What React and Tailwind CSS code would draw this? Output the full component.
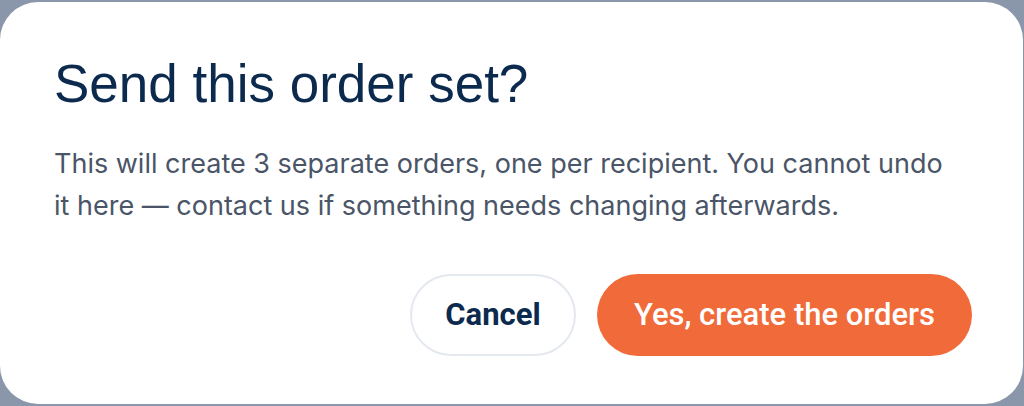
import React from 'react';

const ConfirmDialog = () => {
    return (
        <div className="w-[1024px] h-[406px] bg-[#8a96aa] pt-[2px] pr-[1px]">
            <div className="h-[402px] bg-white rounded-[38px] pl-[54px] pr-[51px] pt-[50px]">
                <h2 className="text-[53px] leading-[64px] text-[#0c2a4e] font-['Liberation_Sans',Arial,sans-serif]">
                    Send this order set?
                </h2>

                <p className="mt-[27px] text-[27px] leading-[42px] text-[#4a5568] font-['Inter',sans-serif]">
                    This will create 3 separate orders, one per recipient. You cannot undo
                    <br />
                    it here — contact us if something needs changing afterwards.
                </p>

                {/* Actions */}
                <div className="mt-[47px] flex justify-end gap-[21px] font-['Roboto',sans-serif]">
                    <button className="w-[166px] h-[82px] rounded-full border-2 border-[#e4e8ef] bg-white text-[#0c2a4e] text-[31px] font-bold">
                        Cancel
                    </button>
                    <button className="w-[375px] h-[82px] rounded-full bg-[#f06a3a] text-white text-[31px] font-medium">
                        Yes, create the orders
                    </button>
                </div>
            </div>
        </div>
    );
};

export default function App() {
    return <ConfirmDialog />;
}
